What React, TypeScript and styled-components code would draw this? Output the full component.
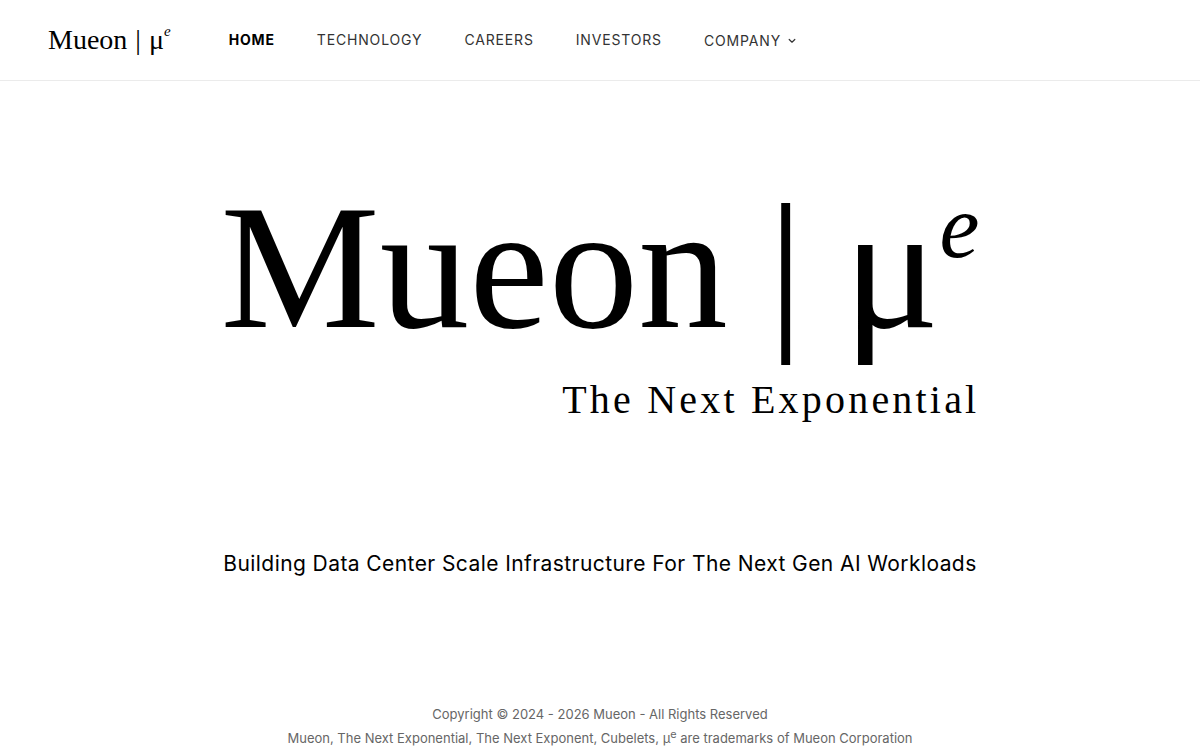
import React from 'react';
import styled, { createGlobalStyle } from 'styled-components';

const GlobalStyle = createGlobalStyle`
  * { box-sizing: border-box; }
  body { margin: 0; background: #fff; color: #000; font-family: Inter, sans-serif; }
`;

const Page = styled.div`
  display: flex;
  flex-direction: column;
  min-height: 100vh;
`;

const Header = styled.header`
  display: flex;
  align-items: center;
  gap: 58px;
  height: 81px;
  padding: 0 48px;
  border-bottom: 1px solid #ebebeb;
`;

const Logo = styled.a`
  color: #000;
  font: 28px/40px 'Liberation Serif', serif;
  text-decoration: none;
  white-space: nowrap;
`;

const Divider = styled.span<{ $gap: number }>`
  margin: 0 ${(p) => p.$gap}px;
`;

const Exponent = styled.sup<{ $size: number; $rise: number }>`
  font-size: ${(p) => p.$size}px;
  font-style: italic;
  line-height: 0;
  vertical-align: ${(p) => p.$rise}px;
`;

const Nav = styled.nav`
  display: flex;
  align-items: center;
  gap: 42px;
`;

const NavLink = styled.a<{ $active?: boolean }>`
  color: ${(p) => (p.$active ? '#000' : '#333')};
  font-size: 14px;
  font-weight: ${(p) => (p.$active ? 700 : 400)};
  line-height: 20px;
  letter-spacing: 0.06em;
  text-decoration: none;
`;

const MenuButton = styled.button`
  display: flex;
  align-items: center;
  gap: 6px;
  padding: 2px 0 0;
  border: 0;
  background: none;
  color: #333;
  font: 14px/20px Inter, sans-serif;
  letter-spacing: 0.06em;
`;

const Main = styled.main`
  display: flex;
  flex: 1;
  flex-direction: column;
  align-items: center;
  padding-top: 86px;
`;

const Brand = styled.div`
  display: flex;
  flex-direction: column;
  align-items: flex-end;
`;

const Title = styled.h1`
  margin: 0;
  font: 179px/200px 'Liberation Serif', serif;
  white-space: nowrap;
`;

const Tagline = styled.p`
  margin: 8px 0 0;
  font: 40px/50px 'Liberation Serif', serif;
  letter-spacing: 0.08em;
`;

const Mission = styled.p`
  margin: 123px 0 0;
  font-size: 21px;
  line-height: 32px;
  letter-spacing: 0.02em;
`;

const Footer = styled.footer`
  color: #666;
  font-size: 13px;
  line-height: 24px;
  text-align: center;

  p { margin: 0; }
  sup { line-height: 0; }
`;

export default function App() {
  return (
    <Page>
      <GlobalStyle />
      <Header>
        <Logo href="#">Mueon<Divider $gap={8}>|</Divider>μ<Exponent $size={15} $rise={13}>e</Exponent></Logo>
        <Nav aria-label="Main">
          <NavLink href="#" $active aria-current="page">HOME</NavLink>
          <NavLink href="#technology">TECHNOLOGY</NavLink>
          <NavLink href="#careers">CAREERS</NavLink>
          <NavLink href="#investors">INVESTORS</NavLink>
          <MenuButton type="button" aria-haspopup="menu">
            COMPANY
            <svg width="10" height="10" viewBox="0 0 10 10" fill="none" stroke="currentColor" strokeWidth="1.2" strokeLinecap="round" strokeLinejoin="round" aria-hidden="true">
              <path d="M2.2 3.5 5 6.2l2.8-2.7" />
            </svg>
          </MenuButton>
        </Nav>
      </Header>
      <Main>
        <Brand>
          <Title>Mueon<Divider $gap={40}>|</Divider>μ<Exponent $size={90} $rise={70}>e</Exponent></Title>
          <Tagline>The Next Exponential</Tagline>
        </Brand>
        <Mission>Building Data Center Scale Infrastructure For The Next Gen AI Workloads</Mission>
      </Main>
      <Footer>
        <p>Copyright © 2024 - 2026 Mueon - All Rights Reserved</p>
        <p>Mueon, The Next Exponential, The Next Exponent, Cubelets, μ<sup>e</sup> are trademarks of Mueon Corporation</p>
      </Footer>
    </Page>
  );
}
